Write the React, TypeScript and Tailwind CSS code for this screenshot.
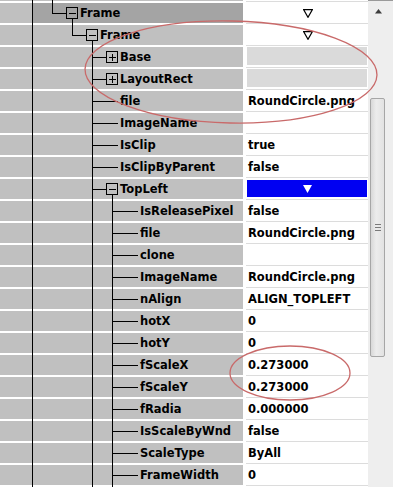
import React from "react";

type TreeSpec = {
  verts: number[];
  elbowFrom?: number;
  hTo?: number;
  hFrom?: number;
  box?: { cx: number; plus: boolean; below: boolean };
};

type Row = {
  label: string;
  textX: number;
  tree: TreeSpec;
  value: string;
  vkind: "text" | "tri" | "gray" | "blue";
  highlight?: boolean;
};

const CY = 12;

function TreeLines({ t }: { t: TreeSpec }) {
  return (
    <svg
      width={243}
      height={22}
      viewBox="0 0 243 22"
      className="absolute left-0 top-0"
      shapeRendering="crispEdges"
    >
      {t.verts.map((x) => (
        <line key={x} x1={x} y1={0} x2={x} y2={22} stroke="#000" strokeWidth={1} />
      ))}
      {t.elbowFrom !== undefined && (
        <>
          <line x1={t.elbowFrom} y1={0} x2={t.elbowFrom} y2={CY + 0.5} stroke="#000" strokeWidth={1} />
          <line x1={t.elbowFrom} y1={CY + 0.5} x2={t.hTo} y2={CY + 0.5} stroke="#000" strokeWidth={1} />
        </>
      )}
      {t.hFrom !== undefined && (
        <line x1={t.hFrom} y1={CY + 0.5} x2={t.hTo} y2={CY + 0.5} stroke="#000" strokeWidth={1} />
      )}
      {t.box && (
        <>
          <rect
            x={t.box.cx - 5.5}
            y={CY - 5.5}
            width={11}
            height={11}
            fill="none"
            stroke="#000"
            strokeWidth={1}
          />
          <line
            x1={t.box.cx - 3}
            y1={CY + 0.5}
            x2={t.box.cx + 4}
            y2={CY + 0.5}
            stroke="#000"
            strokeWidth={1}
          />
          {t.box.plus && (
            <line
              x1={t.box.cx + 0.5}
              y1={CY - 3}
              x2={t.box.cx + 0.5}
              y2={CY + 4}
              stroke="#000"
              strokeWidth={1}
            />
          )}
          {t.box.below && (
            <line
              x1={t.box.cx + 0.5}
              y1={CY + 5.5}
              x2={t.box.cx + 0.5}
              y2={22}
              stroke="#000"
              strokeWidth={1}
            />
          )}
        </>
      )}
    </svg>
  );
}

const lvl2Leaf: TreeSpec = { verts: [32.5, 92.5], hFrom: 92, hTo: 118 };
const lvl3Leaf: TreeSpec = { verts: [32.5, 92.5, 112.5], hFrom: 112, hTo: 138 };

const rows: Row[] = [
  { label: "", textX: 0, tree: { verts: [32.5, 52.5] }, value: "", vkind: "text" },
  {
    label: "Frame",
    textX: 80,
    tree: { verts: [32.5], elbowFrom: 52.5, hTo: 66, box: { cx: 72, plus: false, below: true } },
    value: "",
    vkind: "tri",
    highlight: true,
  },
  {
    label: "Frame",
    textX: 100,
    tree: { verts: [32.5], elbowFrom: 72.5, hTo: 86, box: { cx: 92, plus: false, below: true } },
    value: "",
    vkind: "tri",
  },
  {
    label: "Base",
    textX: 120,
    tree: { verts: [32.5, 92.5], hFrom: 92, hTo: 106, box: { cx: 112, plus: true, below: false } },
    value: "",
    vkind: "gray",
  },
  {
    label: "LayoutRect",
    textX: 120,
    tree: { verts: [32.5, 92.5], hFrom: 92, hTo: 106, box: { cx: 112, plus: true, below: false } },
    value: "",
    vkind: "gray",
  },
  { label: "file", textX: 120, tree: lvl2Leaf, value: "RoundCircle.png", vkind: "text" },
  { label: "ImageName", textX: 120, tree: lvl2Leaf, value: "", vkind: "text" },
  { label: "IsClip", textX: 120, tree: lvl2Leaf, value: "true", vkind: "text" },
  { label: "IsClipByParent", textX: 120, tree: lvl2Leaf, value: "false", vkind: "text" },
  {
    label: "TopLeft",
    textX: 120,
    tree: { verts: [32.5, 92.5], hFrom: 92, hTo: 106, box: { cx: 112, plus: false, below: true } },
    value: "",
    vkind: "blue",
  },
  { label: "IsReleasePixel", textX: 140, tree: lvl3Leaf, value: "false", vkind: "text" },
  { label: "file", textX: 140, tree: lvl3Leaf, value: "RoundCircle.png", vkind: "text" },
  { label: "clone", textX: 140, tree: lvl3Leaf, value: "", vkind: "text" },
  { label: "ImageName", textX: 140, tree: lvl3Leaf, value: "RoundCircle.png", vkind: "text" },
  { label: "nAlign", textX: 140, tree: lvl3Leaf, value: "ALIGN_TOPLEFT", vkind: "text" },
  { label: "hotX", textX: 140, tree: lvl3Leaf, value: "0", vkind: "text" },
  { label: "hotY", textX: 140, tree: lvl3Leaf, value: "0", vkind: "text" },
  { label: "fScaleX", textX: 140, tree: lvl3Leaf, value: "0.273000", vkind: "text" },
  { label: "fScaleY", textX: 140, tree: lvl3Leaf, value: "0.273000", vkind: "text" },
  { label: "fRadia", textX: 140, tree: lvl3Leaf, value: "0.000000", vkind: "text" },
  { label: "IsScaleByWnd", textX: 140, tree: lvl3Leaf, value: "false", vkind: "text" },
  { label: "ScaleType", textX: 140, tree: lvl3Leaf, value: "ByAll", vkind: "text" },
  { label: "FrameWidth", textX: 140, tree: lvl3Leaf, value: "0", vkind: "text" },
  { label: "", textX: 140, tree: lvl3Leaf, value: "", vkind: "text" },
];

function ValueCell({ row }: { row: Row }) {
  return (
    <div className="flex h-[22px] w-[125px] flex-col bg-white">
      <div className="ml-[3px] h-[1px] bg-[#dcdcdc]" />
      <div className="h-[1px]" />
      <div className="flex h-[20px] flex-col">
        {row.vkind === "text" && (
          <div className="flex h-[20px] items-center pl-[5px] pt-[2px] leading-none">{row.value}</div>
        )}
        {row.vkind === "tri" && (
          <div className="flex h-[20px] items-center pl-[60px]">
            <svg width="10" height="9" viewBox="0 0 10 9">
              <polygon points="0.7,0.7 9.3,0.7 5,8.3" fill="none" stroke="#000" strokeWidth="1.2" />
            </svg>
          </div>
        )}
        {row.vkind === "gray" && <div className="ml-[4px] mr-[1px] h-[18px] bg-[#dadada]" />}
        {row.vkind === "blue" && (
          <div className="ml-[4px] mr-[1px] mt-[1px] flex h-[17px] items-center bg-[#0000f2] pl-[56px]">
            <svg width="9" height="8" viewBox="0 0 9 8">
              <polygon points="0,0 9,0 4.5,8" fill="#fff" />
            </svg>
          </div>
        )}
      </div>
    </div>
  );
}

function LabelCell({ row }: { row: Row }) {
  return (
    <div className="relative flex h-[22px] w-[243px] flex-col overflow-hidden">
      <div className="h-[2px] bg-white" />
      <div
        className={
          row.highlight
            ? "flex h-[20px] items-center bg-[linear-gradient(to_right,#c0c0c0_33px,#a4a4a4_33px)] pt-[2px] leading-none"
            : "flex h-[20px] items-center bg-[#c0c0c0] pt-[2px] leading-none"
        }
      >
        <span className="whitespace-nowrap" style={{ paddingLeft: row.textX }}>
          {row.label}
        </span>
      </div>
      <TreeLines t={row.tree} />
    </div>
  );
}

function Scrollbar() {
  return (
    <div className="flex h-[487px] w-[25px] flex-col border-t border-[#9a9a9a] bg-[#eeeeee]">
      <div className="flex h-[16px] pl-[7px] pt-[8px]">
        <svg width="7" height="5" viewBox="0 0 7 5">
          <polygon points="3.5,0 7,4.5 0,4.5" fill="#3c3c3c" />
        </svg>
      </div>
      <div className="ml-[2px] mt-[81px] flex h-[259px] w-[15px] flex-col items-center justify-center rounded-[2px] border border-[#a6a6a6] bg-[linear-gradient(to_right,#d8d8d8,#ececec_40%,#e2e2e2)]">
        <div className="flex flex-col gap-[2px]">
          <div className="h-[1px] w-[6px] bg-[#7a7a7a]" />
          <div className="h-[1px] w-[6px] bg-[#7a7a7a]" />
          <div className="h-[1px] w-[6px] bg-[#7a7a7a]" />
        </div>
      </div>
    </div>
  );
}

export default function App() {
  return (
    <div className="relative flex h-[487px] w-[393px] overflow-hidden bg-white font-['DejaVu_Sans',sans-serif] text-[11.5px] font-bold text-black">
      <div className="flex w-[368px] flex-col">
        <div className="-mt-[21px] flex flex-col">
          {rows.map((r, i) => (
            <div key={i} className="flex">
              <LabelCell row={r} />
              <ValueCell row={r} />
            </div>
          ))}
        </div>
      </div>
      <Scrollbar />
      <svg
        className="pointer-events-none absolute left-0 top-0"
        width="393"
        height="487"
        viewBox="0 0 393 487"
      >
        <ellipse
          cx="231"
          cy="72"
          rx="146"
          ry="51"
          transform="rotate(1.2 231 72)"
          fill="none"
          stroke="#c96a6a"
          strokeWidth="1.3"
        />
        <ellipse cx="290" cy="373" rx="60" ry="27" fill="none" stroke="#c96a6a" strokeWidth="1.3" />
      </svg>
    </div>
  );
}
